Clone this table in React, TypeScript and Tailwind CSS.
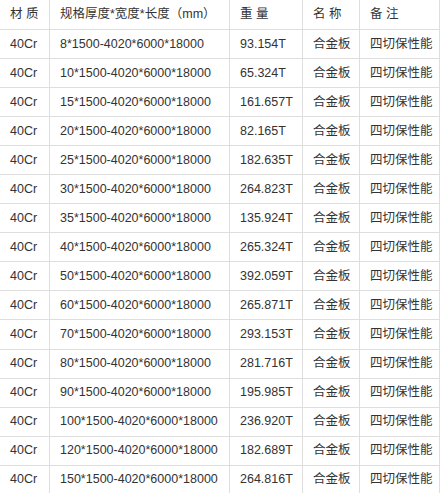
import React from "react";

const rows: [string, string, string][] = [
  ["8", "93.154T", ""],
  ["10", "65.324T", ""],
  ["15", "161.657T", ""],
  ["20", "82.165T", ""],
  ["25", "182.635T", ""],
  ["30", "264.823T", ""],
  ["35", "135.924T", ""],
  ["40", "265.324T", ""],
  ["50", "392.059T", ""],
  ["60", "265.871T", ""],
  ["70", "293.153T", ""],
  ["80", "281.716T", ""],
  ["90", "195.985T", ""],
  ["100", "236.920T", ""],
  ["120", "182.689T", ""],
  ["150", "264.816T", ""],
];

const cell =
  "flex items-center pl-[10px] border-r border-b border-[#dedede] whitespace-nowrap overflow-hidden";

export default function App() {
  return (
    <div
      className="w-[442px] h-[493px] bg-white overflow-hidden text-[#333333] text-[12.5px]"
      style={{ fontFamily: '"Liberation Sans", Arial, "Noto Sans CJK SC", sans-serif' }}
    >
      <div className="grid grid-cols-[50px_180px_73px_57px_80px] grid-rows-[30px_repeat(16,29.06px)] w-[440px]">
        <div className={cell}>材 质</div>
        <div className={cell}>规格厚度*宽度*长度（mm）</div>
        <div className={cell}>重 量</div>
        <div className={cell}>名 称</div>
        <div className={cell}>备 注</div>
        {rows.map(([t, w]) => (
          <React.Fragment key={t}>
            <div className={cell}>40Cr</div>
            <div className={cell}>{t}*1500-4020*6000*18000</div>
            <div className={cell}>{w}</div>
            <div className={cell}>合金板</div>
            <div className={cell}>四切保性能</div>
          </React.Fragment>
        ))}
      </div>
    </div>
  );
}
